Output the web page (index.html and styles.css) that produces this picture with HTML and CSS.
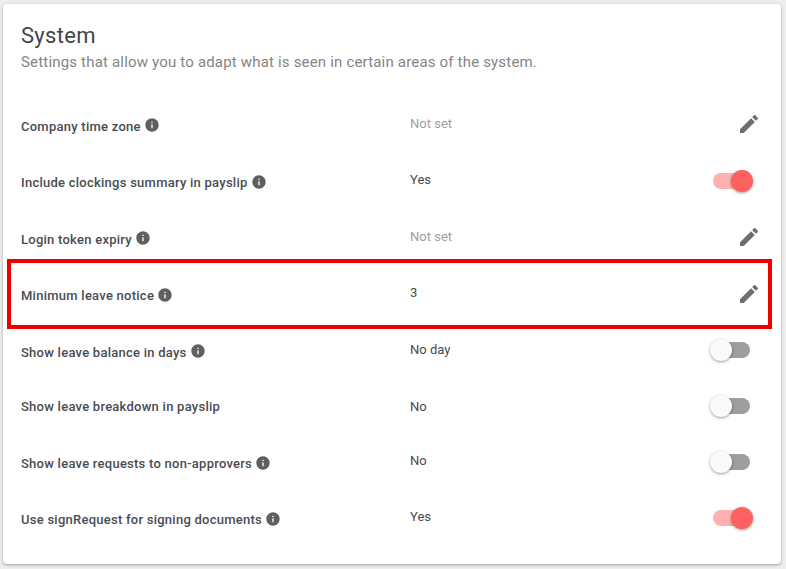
FILE: index.html
```html
<!DOCTYPE html>
<html lang="en">
<head>
  <meta charset="UTF-8">
  <title>System settings</title>
  <link rel="stylesheet" href="styles.css">
</head>
<body>
  <svg width="0" height="0" class="defs">
    <symbol id="info" viewBox="0 0 24 24"><path d="M12 2C6.48 2 2 6.48 2 12s4.48 10 10 10 10-4.48 10-10S17.52 2 12 2zm1 15h-2v-6h2v6zm0-8h-2V7h2v2z"/></symbol>
    <symbol id="pencil" viewBox="0 0 24 24"><path d="M3 17.25V21h3.75L17.81 9.94l-3.75-3.75L3 17.25zM20.71 7.04a1 1 0 0 0 0-1.41l-2.34-2.34a1 1 0 0 0-1.41 0l-1.83 1.83 3.75 3.75 1.83-1.83z"/></symbol>
  </svg>

  <main class="card">
    <h1>System</h1>
    <p class="subtitle">Settings that allow you to adapt what is seen in certain areas of the system.</p>

    <div class="rows">
      <div class="row">
        <div class="label">Company time zone <svg class="info"><use href="#info"/></svg></div>
        <div class="value muted">Not set</div>
        <div class="action"><svg class="pencil"><use href="#pencil"/></svg></div>
      </div>
      <div class="row">
        <div class="label">Include clockings summary in payslip <svg class="info"><use href="#info"/></svg></div>
        <div class="value">Yes</div>
        <div class="action"><span class="switch on"></span></div>
      </div>
      <div class="row">
        <div class="label">Login token expiry <svg class="info"><use href="#info"/></svg></div>
        <div class="value muted">Not set</div>
        <div class="action"><svg class="pencil"><use href="#pencil"/></svg></div>
      </div>
      <div class="row highlighted">
        <div class="label">Minimum leave notice <svg class="info"><use href="#info"/></svg></div>
        <div class="value">3</div>
        <div class="action"><svg class="pencil"><use href="#pencil"/></svg></div>
      </div>
      <div class="row">
        <div class="label">Show leave balance in days <svg class="info"><use href="#info"/></svg></div>
        <div class="value">No day</div>
        <div class="action"><span class="switch"></span></div>
      </div>
      <div class="row short plain">
        <div class="label">Show leave breakdown in payslip</div>
        <div class="value">No</div>
        <div class="action"><span class="switch"></span></div>
      </div>
      <div class="row short">
        <div class="label">Show leave requests to non-approvers <svg class="info"><use href="#info"/></svg></div>
        <div class="value">No</div>
        <div class="action"><span class="switch"></span></div>
      </div>
      <div class="row">
        <div class="label">Use signRequest for signing documents <svg class="info"><use href="#info"/></svg></div>
        <div class="value">Yes</div>
        <div class="action"><span class="switch on"></span></div>
      </div>
    </div>
  </main>
</body>
</html>
```

FILE: styles.css
```css
* { box-sizing: border-box; margin: 0; padding: 0; }
html, body {
  height: 100%;
  overflow: hidden;
}
body {
  background: #eeeeee;
  font-family: Roboto, sans-serif;
  padding: 4px 5px 5px 3px;
}
.defs { position: absolute; }

/* Card */
.card {
  height: 560px;
  background: #fff;
  border-radius: 4px;
  box-shadow: 0 1px 3px rgba(0, 0, 0, 0.35);
  padding: 19px 18px 0;
}
.card h1 {
  font-size: 22px;
  line-height: 26px;
  letter-spacing: 0.3px;
  font-weight: 400;
  color: #42454a;
}
.subtitle {
  margin-top: 3px;
  font-size: 15px;
  line-height: 20px;
  letter-spacing: 0.18px;
  color: #858585;
}

/* Rows */
.rows {
  margin-top: 24.5px;
}
.row {
  position: relative;
  display: grid;
  grid-template-columns: 389px 1fr 60px;
  align-items: center;
  height: 56.5px;
}
.row.short { height: 55.5px; }
.label {
  display: flex;
  align-items: center;
  gap: 3px;
  padding-top: 3px;
  font-size: 13px;
  font-weight: 500;
  letter-spacing: 0.25px;
  color: #4a4c52;
}
.row.plain .label { padding-top: 0; }
.value {
  font-size: 13px;
  color: #4a4a4a;
  padding-bottom: 3px;
}
.row.plain .value { padding-bottom: 1px; }
.value.muted { color: #9e9e9e; }
.action {
  display: flex;
  justify-content: flex-end;
  align-items: center;
  padding-right: 2px;
  margin-top: -1px;
}

.info {
  width: 16px;
  height: 16px;
  margin-top: -2px;
  fill: #5f5f5f;
}
.pencil {
  width: 24px;
  height: 24px;
  fill: #6e6e6e;
}

/* Toggle */
.switch {
  position: relative;
  display: block;
  width: 37px;
  height: 16px;
  margin-right: 11px;
  border-radius: 8px;
  background: #9e9e9e;
}
.switch::after {
  content: "";
  position: absolute;
  top: -3px;
  left: -3px;
  width: 22px;
  height: 22px;
  border-radius: 50%;
  background: #fafafa;
  box-shadow: 0 1px 3px rgba(0, 0, 0, 0.4);
}
.switch.on { background: #ffb0b0; }
.switch.on::after {
  left: auto;
  right: -3px;
  background: #ff6060;
}

/* Red annotation around a row */
.highlighted::after {
  content: "";
  position: absolute;
  top: -7px;
  bottom: -6px;
  left: -14px;
  right: -9px;
  border: 4px solid #ee0000;
  pointer-events: none;
}
```
